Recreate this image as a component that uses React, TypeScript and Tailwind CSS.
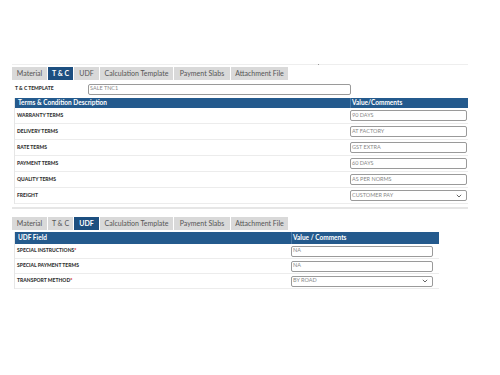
import React from "react";

const TABS = ["Material", "T & C", "UDF", "Calculation Template", "Payment Slabs", "Attachment File"];
const TAB_W = ["w-[35px]", "w-[25px]", "w-[25px]", "w-[73px]", "w-[56px]", "w-[57px]"];

function Tabs({ active }: { active: string }) {
  return (
    <div className="flex h-[13px] gap-px">
      {TABS.map((t, i) => (
        <div
          key={t}
          className={`${TAB_W[i]} flex items-center justify-center text-[7px] leading-none ${
            t === active ? "bg-[#1d4f80] font-bold text-white" : "bg-[#d9d9d9] text-[#555]"
          }`}
        >
          {t}
        </div>
      ))}
    </div>
  );
}

function Field({ value, select, w }: { value: string; select?: boolean; w: string }) {
  return (
    <div
      className={`${w} flex h-[11px] items-center justify-between rounded-[2px] border border-[#9a9a9a] bg-white pl-[1px] pr-[4px] text-[5.5px] leading-none text-[#888]`}
    >
      <span>{value}</span>
      {select && (
        <svg width="6" height="4" viewBox="0 0 6 4" className="text-[#555]">
          <path d="M0.8 0.8 L3 3 L5.2 0.8" fill="none" stroke="currentColor" strokeWidth="0.9" />
        </svg>
      )}
    </div>
  );
}

const TERMS = [
  ["WARRANTY TERMS", "90 DAYS"],
  ["DELIVERY TERMS", "AT FACTORY"],
  ["RATE TERMS", "GST EXTRA"],
  ["PAYMENT TERMS", "60 DAYS"],
  ["QUALITY TERMS", "AS PER NORMS"],
  ["FREIGHT", "CUSTOMER PAY"],
];

const UDF: [string, string, boolean, boolean][] = [
  ["SPECIAL INSTRUCTIONS", "NA", true, false],
  ["SPECIAL PAYMENT TERMS", "NA", false, false],
  ["TRANSPORT METHOD", "BY ROAD", true, true],
];

export default function App() {
  return (
    <div
      className="h-[375px] w-[500px] overflow-hidden bg-white pt-[64px]"
      style={{ fontFamily: "Lato, 'Open Sans', sans-serif" }}
    >
      {/* T & C panel */}
      <div className="relative ml-[12px] w-[456px] border-t border-[#eeeeee] pt-[2px]">
        <div className="absolute left-[306px] top-[-1px] h-px w-px bg-[#999]" />
        <Tabs active="T & C" />
        <div className="flex h-[18px] items-center pl-[3px]">
          <div className="w-[73px] text-[5px] font-black text-[#333]">T &amp; C TEMPLATE</div>
          <Field value="SALE TNC1" w="w-[263px]" />
        </div>
        <div className="ml-[2px] w-[454px] border-l border-[#e6e6e6]">
          <div className="flex h-[10px] items-center bg-[#245a8d] text-[6.5px] font-bold text-white">
            <div className="w-[335px] pl-[3px]">Terms &amp; Condition Description</div>
            <div className="h-full border-l border-[#4a78a6] pl-[1px] leading-[10px]">Value/Comments</div>
          </div>
          {TERMS.map(([k, v], i) => (
            <div key={k} className="flex h-[16px] items-center border-b border-[#ececec]">
              <div className="w-[335px] pl-[2px] text-[5px] font-black text-[#333]">{k}</div>
              <Field value={v} select={i === TERMS.length - 1} w="w-[117px]" />
            </div>
          ))}
        </div>
        <div className="mt-[3px] h-[2px] w-[456px] bg-[#e6e6e6]" />
      </div>

      {/* UDF panel */}
      <div className="ml-[12px] mt-[8px] w-[456px]">
        <Tabs active="UDF" />
        <div className="ml-[2px] mt-[2px] w-[425px] border-l border-[#e6e6e6]">
          <div className="flex h-[12px] items-center bg-[#245a8d] text-[6.5px] font-bold text-white">
            <div className="w-[276px] pl-[3px]">UDF Field</div>
            <div className="h-full border-l border-[#4a78a6] pl-[1px] leading-[12px]">Value / Comments</div>
          </div>
          {UDF.map(([k, v, req, sel]) => (
            <div key={k} className="flex h-[15px] items-center border-b border-[#ececec]">
              <div className="w-[276px] pl-[2px] text-[5px] font-black text-[#333]">
                {k}
                {req && <span className="text-[#d33]">*</span>}
              </div>
              <Field value={v} select={sel} w="w-[142px]" />
            </div>
          ))}
        </div>
      </div>
    </div>
  );
}
